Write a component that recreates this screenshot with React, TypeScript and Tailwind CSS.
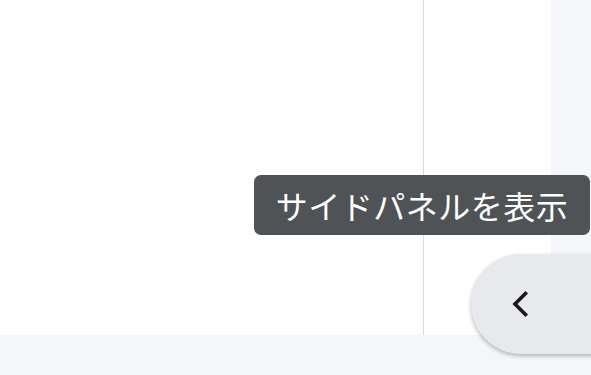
import React from 'react';

const App = () => {
  return (
    <div className="relative w-[591px] h-[375px] overflow-hidden bg-[#f5f6fa] font-['Noto_Sans_CJK_JP',sans-serif]">
      <div className="flex h-[335px]">
        <div className="flex w-[551px] bg-white">
          <div className="w-[424px] border-r border-[#dcdcdc]" />
          <div className="flex-1" />
        </div>
        <div className="flex-1" />
      </div>

      {/* Tooltip */}
      <div className="absolute left-[254px] top-[175px] w-[336px] h-[60px] rounded-[7px] bg-[#505356] flex items-center justify-center text-white text-[32px] leading-none tracking-[0.5px]">
        サイドパネルを表示
      </div>

      {/* Toggle button */}
      <button className="absolute left-[471px] top-[254px] w-[150px] h-[100px] rounded-l-full bg-[#e8e9ec] shadow-[0_2px_4px_rgba(0,0,0,0.28)] flex items-center pl-[41px]">
        <svg width="16" height="26" viewBox="0 0 16 26" fill="none">
          <path d="M13.5 2.5 L3 13 L13.5 23.5" stroke="#1a1a1a" strokeWidth="3.6" strokeLinecap="square" strokeLinejoin="miter" />
        </svg>
      </button>
    </div>
  );
};

export default App;
